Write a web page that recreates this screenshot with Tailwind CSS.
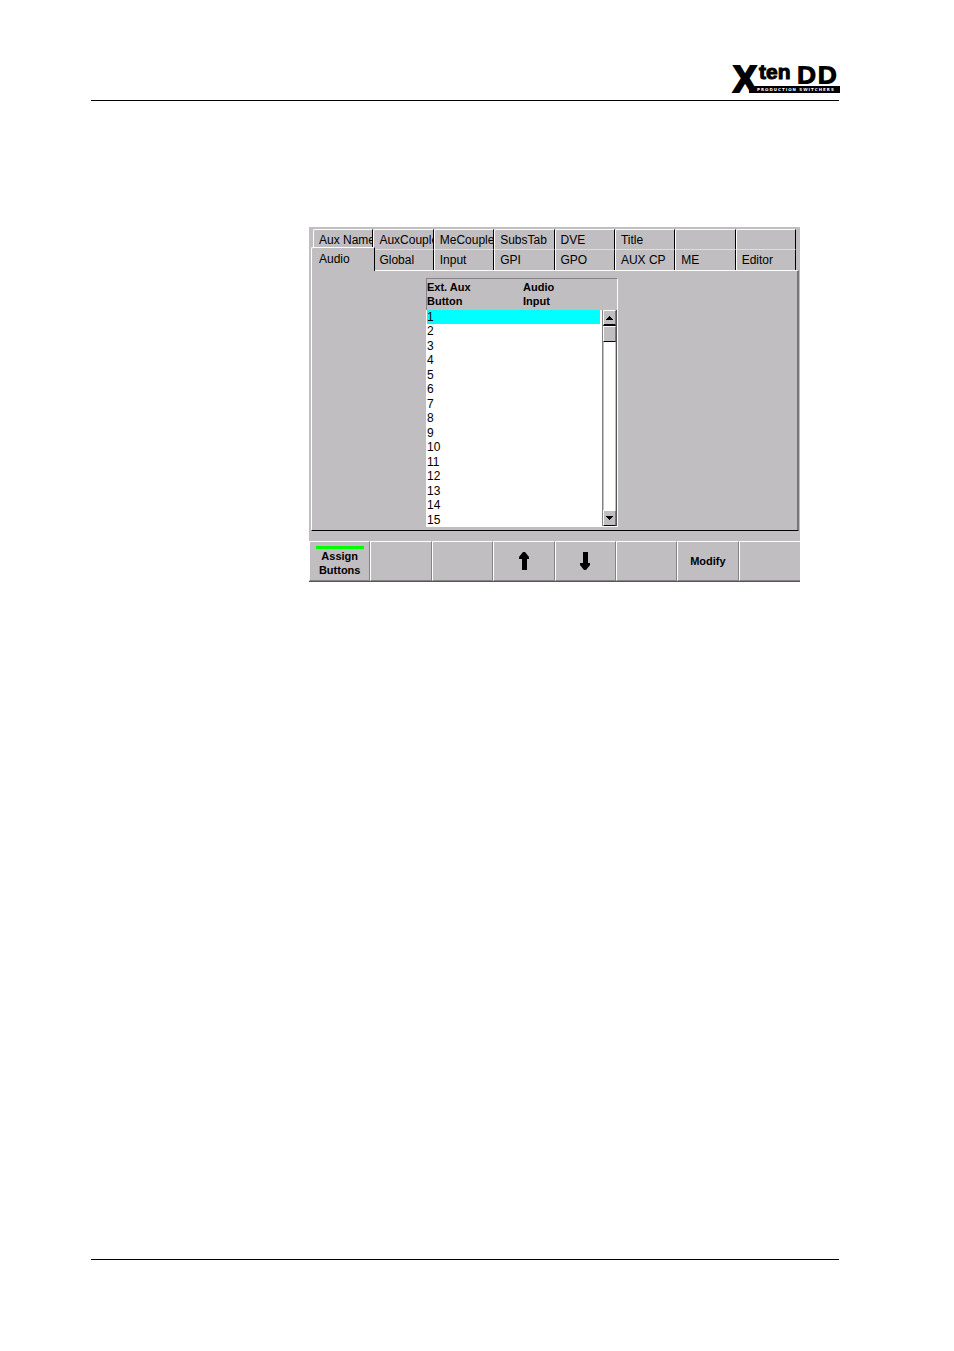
<!DOCTYPE html>
<html lang="en">
<head>
<meta charset="utf-8">
<meta name="viewport" content="width=device-width, initial-scale=1">
<title>Xten DD – Audio setup</title>
<script src="https://cdn.jsdelivr.net/npm/@tailwindcss/browser@4"></script>
</head>
<body class="bg-white text-black font-['Liberation_Sans',Arial,sans-serif]">
<div class="min-h-screen flex flex-col pl-[91px] pr-[115px]">
  <header class="flex justify-end pt-16 pb-[6px] border-b border-black">
    <svg class="block w-[108px] h-[30px] overflow-visible" viewBox="0 0 108 30" role="img" aria-label="Xten DD Production Switchers">
      <rect x="18" y="22" width="91" height="7" fill="#000"/>
      <g font-family="Liberation Sans, sans-serif" font-weight="700" stroke="#000">
        <text x="2" y="28" font-size="36" stroke-width="2">X</text>
        <text x="28" y="15" font-size="21" stroke-width="1">ten</text>
      </g>
      <text x="65" y="20" font-family="DejaVu Sans, sans-serif" font-weight="700" font-size="25">DD</text>
      <text x="26" y="27" fill="#fff" font-family="DejaVu Sans, sans-serif" font-weight="700" font-size="4" letter-spacing="1">PRODUCTION SWITCHERS</text>
    </svg>
  </header>

  <main class="grow pt-[126px] pl-[218px] pr-[39px]">
    <section class="bg-[#c1bec1] text-xs">
      <div class="pt-0.5 pl-0.5 pr-px">
        <nav class="pl-0.5 pr-[3px]">
          <div class="grid grid-cols-8 h-5">
            <button class="text-left pl-[5px] leading-5 overflow-hidden whitespace-nowrap border-t border-l border-white border-r border-r-black rounded-tl-xs">Aux Name</button>
            <button class="text-left pl-[5px] leading-5 overflow-hidden whitespace-nowrap border-t border-l border-white border-r border-r-black rounded-tl-xs">AuxCouple</button>
            <button class="text-left pl-[5px] leading-5 overflow-hidden whitespace-nowrap border-t border-l border-white border-r border-r-black rounded-tl-xs">MeCouple</button>
            <button class="text-left pl-[5px] leading-5 overflow-hidden whitespace-nowrap border-t border-l border-white border-r border-r-black rounded-tl-xs">SubsTab</button>
            <button class="text-left pl-[5px] leading-5 overflow-hidden whitespace-nowrap border-t border-l border-white border-r border-r-black rounded-tl-xs">DVE</button>
            <button class="text-left pl-[5px] leading-5 overflow-hidden whitespace-nowrap border-t border-l border-white border-r border-r-black rounded-tl-xs">Title</button>
            <button class="border-t border-l border-white border-r border-r-black rounded-tl-xs" aria-label="Empty tab"></button>
            <button class="border-t border-l border-white border-r border-r-black rounded-tl-xs" aria-label="Empty tab"></button>
          </div>
          <div class="grid grid-cols-8 h-[21px]">
            <button class="relative z-10 -mt-0.5 -ml-0.5 -mr-0.5 -mb-px text-left pl-[7px] pb-0.5 bg-[#c1bec1] border-t border-l border-white border-r border-r-black rounded-tl-xs">Audio</button>
            <button class="text-left pl-[5px] leading-5 border-t border-t-[#dedede] border-l border-l-white border-r border-r-black">Global</button>
            <button class="text-left pl-[5px] leading-5 border-t border-t-[#dedede] border-l border-l-white border-r border-r-black">Input</button>
            <button class="text-left pl-[5px] leading-5 border-t border-t-[#dedede] border-l border-l-white border-r border-r-black">GPI</button>
            <button class="text-left pl-[5px] leading-5 border-t border-t-[#dedede] border-l border-l-white border-r border-r-black">GPO</button>
            <button class="text-left pl-[5px] leading-5 border-t border-t-[#dedede] border-l border-l-white border-r border-r-black">AUX CP</button>
            <button class="text-left pl-[5px] leading-5 border-t border-t-[#dedede] border-l border-l-white border-r border-r-black">ME</button>
            <button class="text-left pl-[5px] leading-5 border-t border-t-[#dedede] border-l border-l-white border-r border-r-black">Editor</button>
          </div>
        </nav>

        <div class="border-t border-l border-white border-r-2 border-r-[#777] border-b border-b-black pt-[7px] pl-[114px]">
          <div class="relative w-48 pb-[3px]">
            <table class="block w-full">
              <thead class="block h-8 border-t border-l border-[#858285] border-r border-r-white text-[11px] leading-[14px] font-bold">
                <tr class="flex text-left pt-px">
                  <th class="w-24" scope="col">Ext. Aux<br>Button</th>
                  <th scope="col">Audio<br>Input</th>
                </tr>
              </thead>
              <tbody class="flex flex-col h-[217px] bg-white border-l border-white leading-[15px] [&>tr]:flex [&>tr]:flex-1 [&>tr]:min-h-0 [&_td:first-child]:w-24">
                <tr class="bg-[#00ffff] mr-[18px]"><td>1</td><td></td></tr>
                <tr><td>2</td><td></td></tr>
                <tr><td>3</td><td></td></tr>
                <tr><td>4</td><td></td></tr>
                <tr><td>5</td><td></td></tr>
                <tr><td>6</td><td></td></tr>
                <tr><td>7</td><td></td></tr>
                <tr><td>8</td><td></td></tr>
                <tr><td>9</td><td></td></tr>
                <tr><td>10</td><td></td></tr>
                <tr><td>11</td><td></td></tr>
                <tr><td>12</td><td></td></tr>
                <tr><td>13</td><td></td></tr>
                <tr><td>14</td><td></td></tr>
                <tr><td>15</td><td></td></tr>
              </tbody>
            </table>
            <div class="absolute right-px top-8 bottom-1 w-[15px] flex flex-col border-l border-[#858285] border-r border-r-[#555]">
              <button aria-label="Scroll up" class="h-4 flex items-center justify-center bg-[#c1bec1] border border-white border-r-[#777] border-b-2 border-b-black">
                <svg class="block w-[7px] h-1" viewBox="0 0 7 4" shape-rendering="crispEdges"><path d="M3 0h1v1h1v1h1v1h1v1H0V3h1V2h1V1h1z"/></svg>
              </button>
              <div class="h-4 bg-[#c1bec1] border border-white border-r-[#777] border-b border-b-black"></div>
              <div class="grow border-x border-[#c1bec1] bg-white"></div>
              <button aria-label="Scroll down" class="h-4 flex items-center justify-center bg-[#c1bec1] border border-white border-r-[#777] border-b border-b-black">
                <svg class="block w-[7px] h-1" viewBox="0 0 7 4" shape-rendering="crispEdges"><path d="M0 0h7v1H6v1H5v1H4v1H3V3H2V2H1V1H0z"/></svg>
              </button>
            </div>
          </div>
        </div>
      </div>

      <div class="mt-[10px] grid grid-cols-8 h-[41px] border-b border-[#555] text-[11px] leading-[14px] font-bold">
        <button class="flex flex-col items-center pt-1 border-t border-l border-white border-r border-r-[#858285] border-b border-b-[#858285]"><span class="block w-12 h-[3px] bg-[#00ff00]"></span>Assign<br>Buttons</button>
        <button aria-label="Empty" class="border-t border-l border-white border-r border-r-[#858285] border-b border-b-[#858285]"></button>
        <button aria-label="Empty" class="border-t border-l border-white border-r border-r-[#858285] border-b border-b-[#858285]"></button>
        <button aria-label="Up" class="flex items-center justify-center border-t border-l border-white border-r border-r-[#858285] border-b border-b-[#858285]">
          <svg class="block w-[10px] h-[18px]" viewBox="0 0 10 18"><path d="M4 0H6L10 5V7H8V18H3V7H0V5z"/></svg>
        </button>
        <button aria-label="Down" class="flex items-center justify-center border-t border-l border-white border-r border-r-[#858285] border-b border-b-[#858285]">
          <svg class="block w-[10px] h-[18px]" viewBox="0 0 10 18"><path d="M4 18H6L10 13V11H8V0H3V11H0V13z"/></svg>
        </button>
        <button aria-label="Empty" class="border-t border-l border-white border-r border-r-[#858285] border-b border-b-[#858285]"></button>
        <button class="border-t border-l border-white border-r border-r-[#858285] border-b border-b-[#858285]">Modify</button>
        <button aria-label="Empty" class="border-t border-l border-white border-b border-b-[#858285]"></button>
      </div>
    </section>
  </main>

  <footer class="pb-[91px]"><hr class="border-t border-black"></footer>
</div>
</body>
</html>
